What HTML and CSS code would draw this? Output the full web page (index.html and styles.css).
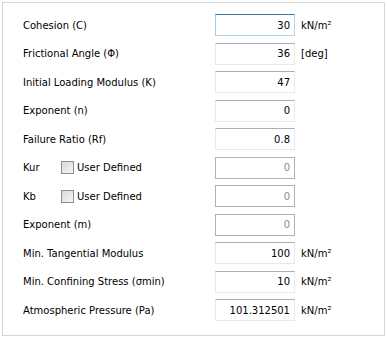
FILE: index.html
```html
<!DOCTYPE html>
<html lang="en">

<head>
    <meta charset="UTF-8">
    <title>Hardening Soil Parameters</title>
    <link rel="stylesheet" href="styles.css">
</head>

<body>
    <div class="panel">
        <div class="row">
            <label class="label">Cohesion (C)</label>
            <input class="field focused" type="text" value="30">
            <span class="unit">kN/m²</span>
        </div>
        <div class="row">
            <label class="label">Frictional Angle (Φ)</label>
            <input class="field" type="text" value="36">
            <span class="unit">[deg]</span>
        </div>
        <div class="row">
            <label class="label">Initial Loading Modulus (K)</label>
            <input class="field" type="text" value="47">
            <span class="unit"></span>
        </div>
        <div class="row">
            <label class="label">Exponent (n)</label>
            <input class="field" type="text" value="0">
            <span class="unit"></span>
        </div>
        <div class="row">
            <label class="label">Failure Ratio (Rf)</label>
            <input class="field" type="text" value="0.8">
            <span class="unit"></span>
        </div>
        <div class="row">
            <div class="label check-label">
                <span class="short">Kur</span>
                <input class="check" type="checkbox" id="kur-user">
                <label for="kur-user">User Defined</label>
            </div>
            <input class="field" type="text" value="0" disabled>
            <span class="unit"></span>
        </div>
        <div class="row">
            <div class="label check-label">
                <span class="short">Kb</span>
                <input class="check" type="checkbox" id="kb-user">
                <label for="kb-user">User Defined</label>
            </div>
            <input class="field" type="text" value="0" disabled>
            <span class="unit"></span>
        </div>
        <div class="row">
            <label class="label">Exponent (m)</label>
            <input class="field" type="text" value="0" disabled>
            <span class="unit"></span>
        </div>
        <div class="row">
            <label class="label">Min. Tangential Modulus</label>
            <input class="field" type="text" value="100">
            <span class="unit">kN/m²</span>
        </div>
        <div class="row">
            <label class="label">Min. Confining Stress (σmin)</label>
            <input class="field" type="text" value="10">
            <span class="unit">kN/m²</span>
        </div>
        <div class="row">
            <label class="label">Atmospheric Pressure (Pa)</label>
            <input class="field" type="text" value="101.312501">
            <span class="unit">kN/m²</span>
        </div>
    </div>
</body>

</html>
```

FILE: styles.css
```css
body {
    margin: 0;
    background-color: #ffffff;
    font-family: 'DejaVu Sans', sans-serif;
    font-size: 10px;
    color: #000000;
}

/* Outer group box */
.panel {
    margin: 2px;
    width: 383px;
    height: 334px;
    box-sizing: border-box;
    border: 1px solid #d5d5d5;
    padding: 11px 0 0 20px;
    display: flex;
    flex-direction: column;
    gap: 6.5px;
}

.row {
    display: grid;
    grid-template-columns: 192px 80px auto;
    align-items: center;
    height: 22px;
}

.label {
    white-space: nowrap;
}

.check-label {
    display: flex;
    align-items: center;
}

.short {
    width: 38px;
}

.check {
    appearance: none;
    -webkit-appearance: none;
    width: 13px;
    height: 13px;
    margin: 0 3px 0 0;
    border: 1px solid #8e8f8f;
    background: linear-gradient(135deg, #d9d9d9, #f4f4f4);
    box-sizing: border-box;
}

.field {
    width: 80px;
    height: 22px;
    box-sizing: border-box;
    margin: 0;
    padding: 0 4px 0 2px;
    border: 1px solid #e3e9ef;
    border-top-color: #abadb3;
    font-family: inherit;
    font-size: 10px;
    color: #000000;
    text-align: right;
    background-color: #ffffff;
    outline: none;
}

.field.focused {
    border-color: #b5d6ea;
    border-top-color: #3d7bad;
    border-left-color: #a9cce4;
}

.field:disabled {
    border-color: #adb2b5;
    color: #8d8d8d;
    background-color: #ffffff;
}

.unit {
    padding-left: 6px;
    white-space: nowrap;
}
```
